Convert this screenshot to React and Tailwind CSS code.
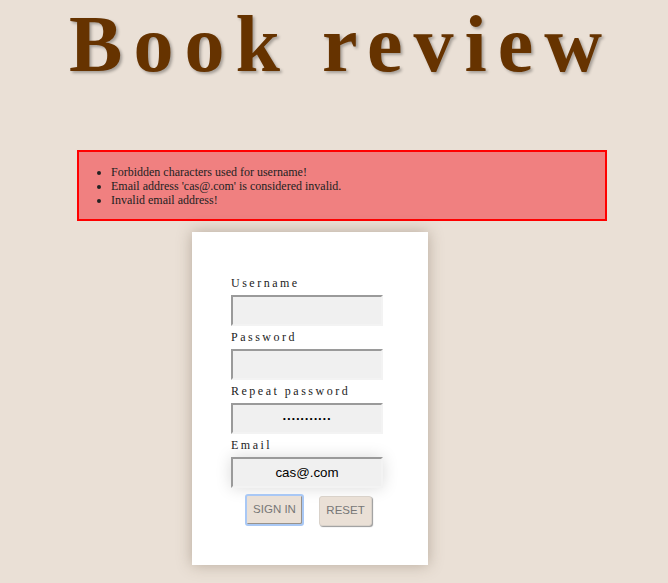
export default function App() {
  const serif = { fontFamily: '"Liberation Serif", "Times New Roman", serif' };
  const sans = { fontFamily: '"Liberation Sans", Arial, sans-serif' };
  const inputCls =
    "block w-[152px] h-[31px] bg-[#f0f0f0] border-2 border-t-[#9a9a9a] border-l-[#9a9a9a] border-r-[#f3f3f3] border-b-[#f3f3f3] text-center text-[13.33px] text-black outline-none";
  const labelCls = "block text-[12px] leading-[14px] tracking-[2.5px] text-[#222] mb-[5px]";
  return (
    <div className="min-h-[583px] bg-[#eae0d6] overflow-hidden" style={serif}>
      <h1
        className="text-center text-[80px] leading-[89px] font-bold tracking-[11px] text-[#663300] pl-[14px] [text-shadow:2px_2px_3px_rgba(0,0,0,0.3)]"
        style={serif}
      >
        Book review
      </h1>
      <div className="mt-[61px] ml-[77px] w-[530px] border-2 border-[#ff0000] bg-[#f08080]">
        <ul className="list-disc pl-[32px] pt-[13px] pb-[12px] text-[12px] leading-[14px] text-[#222]">
          <li>Forbidden characters used for username!</li>
          <li>Email address 'cas@.com' is considered invalid.</li>
          <li>Invalid email address!</li>
        </ul>
      </div>
      <div className="mt-[11px] ml-[192px] w-[236px] bg-white pt-[44px] pl-[39px] pb-[39px] shadow-[0_0_14px_rgba(90,70,50,0.35)]">
        <label className={labelCls}>Username</label>
        <input className={inputCls + " mb-[4px]"} style={sans} readOnly value="" />
        <label className={labelCls}>Password</label>
        <input className={inputCls + " mb-[4px]"} style={sans} readOnly value="" />
        <label className={labelCls}>Repeat password</label>
        <input className={inputCls + " mb-[4px] font-bold"} style={sans} readOnly value="···········" />
        <label className={labelCls}>Email</label>
        <input
          className={inputCls + " shadow-[0_0_16px_rgba(0,0,0,0.15)]"}
          style={sans}
          readOnly
          value="cas@.com"
        />
        <div className="flex items-start mt-[6px] pl-[14px] gap-[15px]">
          <button
            className="w-[59px] h-[32px] rounded-[3px] bg-[#eae0d6] border-2 border-[#a9c8f5] shadow-[inset_-1px_-1px_0_rgba(0,0,0,0.35)] text-[11.5px] text-[#777] uppercase"
            style={sans}
          >
            Sign in
          </button>
          <button
            className="mt-[2px] w-[53px] h-[30px] rounded-[3px] bg-[#eae0d6] border border-[#d9d2ca] shadow-[1px_1px_1px_rgba(0,0,0,0.4)] text-[11.5px] text-[#777] uppercase"
            style={sans}
          >
            Reset
          </button>
        </div>
      </div>
    </div>
  );
}
